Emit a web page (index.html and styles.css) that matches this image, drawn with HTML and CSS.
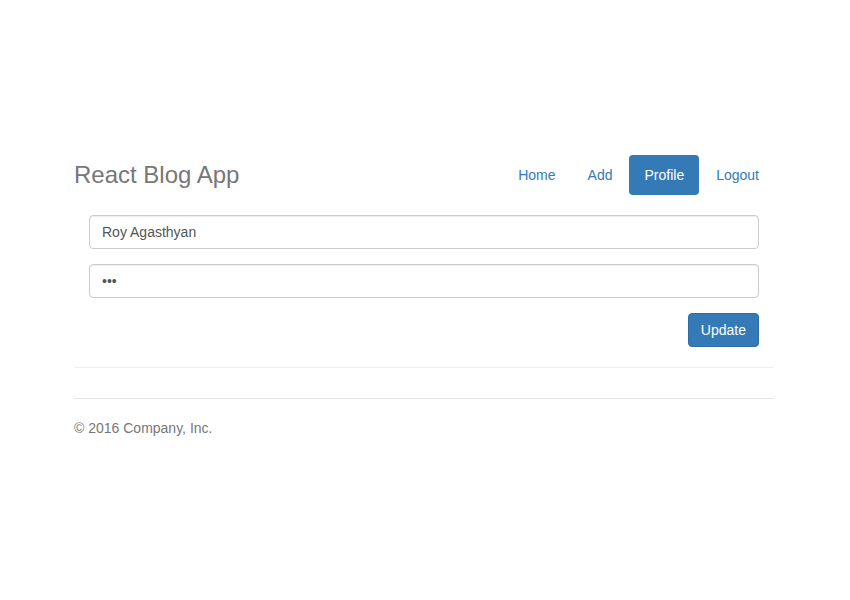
FILE: index.html
```html
<!DOCTYPE html>
<html>
<head>
<meta charset="utf-8">
<title>React Blog App</title>
<link rel="stylesheet" href="styles.css">
</head>
<body>
<div class="container">
  <div class="header">
    <h3 class="brand">React Blog App</h3>
    <ul class="nav-pills">
      <li><a href="#">Home</a></li>
      <li><a href="#">Add</a></li>
      <li class="active"><a href="#">Profile</a></li>
      <li><a href="#">Logout</a></li>
    </ul>
  </div>
  <form class="form">
    <div class="form-group">
      <input class="form-control" type="text" value="Roy Agasthyan">
    </div>
    <div class="form-group">
      <input class="form-control" type="password" value="abc">
    </div>
    <div class="actions">
      <button type="button" class="btn-primary">Update</button>
    </div>
  </form>
  <hr class="divider">
  <footer class="footer">
    <p>© 2016 Company, Inc.</p>
  </footer>
</div>
</body>
</html>
```
FILE: styles.css
```css
* { box-sizing: border-box; }
html, body { margin: 0; padding: 0; }
body {
  font-family: "Liberation Sans", Arial, Helvetica, sans-serif;
  font-size: 14px;
  line-height: 20px;
  color: #333;
  background: #fff;
  padding-top: 155px;
}
.container {
  width: 730px;
  margin: 0 auto;
  padding: 0 16px 0 14px;
}
.header {
  display: flex;
  justify-content: space-between;
  align-items: center;
  padding-bottom: 20px;
}
.brand {
  margin: 0;
  font-size: 24px;
  font-weight: 500;
  line-height: 40px;
  color: #777;
}
.nav-pills {
  display: flex;
  list-style: none;
  margin: 0;
  padding: 0;
}
.nav-pills li { margin-left: 2px; }
.nav-pills a {
  display: block;
  padding: 10px 15px;
  line-height: 20px;
  color: #337ab7;
  text-decoration: none;
  border-radius: 4px;
}
.nav-pills li.active a {
  background: #337ab7;
  color: #fff;
}
.form {
  padding: 0 15px;
  margin: 0;
}
.form-group { margin-bottom: 15px; }
.form-control {
  display: block;
  width: 100%;
  height: 34px;
  padding: 6px 12px;
  font-family: "Liberation Sans", Arial, sans-serif;
  font-size: 14px;
  line-height: 20px;
  color: #555;
  background: #fff;
  border: 1px solid #ccc;
  border-radius: 4px;
  box-shadow: inset 0 1px 1px rgba(0,0,0,.075);
  outline: none;
}
.actions {
  display: flex;
  justify-content: flex-end;
}
.btn-primary {
  height: 34px;
  padding: 6px 12px;
  font-family: "Liberation Sans", Arial, sans-serif;
  font-size: 14px;
  line-height: 20px;
  color: #fff;
  background: #337ab7;
  border: 1px solid #2e6da4;
  border-radius: 4px;
}
.divider {
  margin: 20px 0 30px;
  border: 0;
  border-top: 1px solid #eee;
}
.footer {
  padding-top: 19px;
  color: #777;
  border-top: 1px solid #e5e5e5;
}
.footer p { margin: 0 0 10px; }
```
